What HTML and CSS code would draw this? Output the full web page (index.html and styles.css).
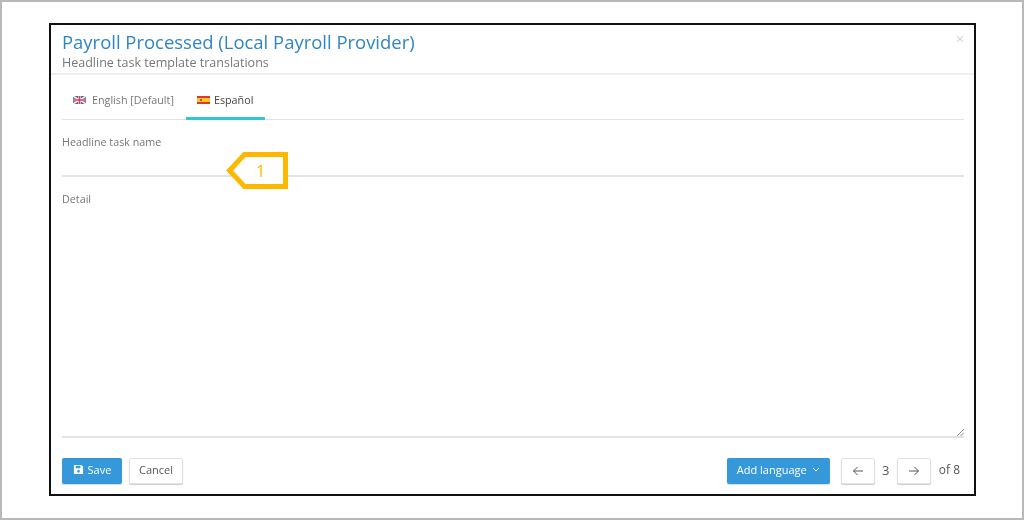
FILE: index.html
```html
<!DOCTYPE html>
<html lang="en">
<head>
<meta charset="utf-8">
<title>Payroll Processed</title>
<link rel="stylesheet" href="styles.css">
</head>
<body>
<div class="frame">
  <div class="modal">
    <header class="head">
      <div>
        <h1 class="title">Payroll Processed (Local Payroll Provider)</h1>
        <p class="subtitle">Headline task template translations</p>
      </div>
      <span class="close">×</span>
    </header>
    <div class="content">
      <nav class="tabs">
        <div class="tab">
          <svg class="flag" viewBox="0 0 13 8"><rect width="13" height="8" fill="#4a5a9c"/><path d="M0 0L13 8M13 0L0 8" stroke="#eee" stroke-width="1.6"/><path d="M6.5 0V8M0 4H13" stroke="#eee" stroke-width="2.6"/><path d="M6.5 0V8M0 4H13" stroke="#d8434f" stroke-width="1.4"/></svg>
          <span>English [Default]</span>
        </div>
        <div class="tab tab-active">
          <svg class="flag" viewBox="0 0 13 8"><rect width="13" height="8" fill="#e2342b"/><rect y="2" width="13" height="4" fill="#f7c623"/><rect x="3" y="3" width="2" height="2" fill="#c0562a"/></svg>
          <span>Español</span>
        </div>
      </nav>
      <div class="field field-name">
        <label class="label">Headline task name</label>
        <div class="line-input"></div>
        <div class="callout">
          <svg class="callout-shape" viewBox="0 0 62 37"><path d="M3.5 18.500L18.500 2.500H59.500V34.500H18.500Z" fill="#fff" stroke="#fdb900" stroke-width="5"/></svg>
          <span class="callout-num">1</span>
        </div>
      </div>
      <div class="field field-detail">
        <label class="label">Detail</label>
        <div class="line-area">
          <svg class="grip" viewBox="0 0 8 8"><path d="M1 8L8 1M4.500 8L8 4.500" stroke="#888" stroke-width="1"/></svg>
        </div>
      </div>
    </div>
    <footer class="foot">
      <div class="group">
        <button class="btn btn-primary btn-save">
          <svg class="save-icon" viewBox="0 0 12 12"><path fill-rule="evenodd" d="M1.500 1H9L11 3V10.500A.5.5 0 0 1 10.500 11H1.500A.5.5 0 0 1 1 10.500V1.500A.5.5 0 0 1 1.500 1ZM3 2V4.500H8V2ZM6 6.500A1.500 1.500 0 1 0 6 9.500A1.500 1.500 0 1 0 6 6.500Z" fill="#fff"/></svg>
          Save
        </button>
        <button class="btn btn-default btn-cancel">Cancel</button>
      </div>
      <div class="group group-right">
        <button class="btn btn-primary btn-add">
          Add language
          <svg class="chev" viewBox="0 0 8 5"><path d="M1 1L4 4L7 1" fill="none" stroke="#fff" stroke-width="1"/></svg>
        </button>
        <div class="pager">
          <button class="btn btn-default btn-arrow"><svg class="arrow" viewBox="0 0 12 10"><path d="M11 5H1.500M5.500 1L1.500 5L5.500 9" fill="none" stroke="#555" stroke-width="1"/></svg></button>
          <span class="page-num">3</span>
          <button class="btn btn-default btn-arrow"><svg class="arrow" viewBox="0 0 12 10"><path d="M1 5H10.500M6.500 1L10.500 5L6.500 9" fill="none" stroke="#555" stroke-width="1"/></svg></button>
          <span class="page-of">of 8</span>
        </div>
      </div>
    </footer>
  </div>
</div>
</body>
</html>
```
FILE: styles.css
```css
* { box-sizing: border-box; }
html, body { margin: 0; padding: 0; }
body {
  font-family: "Open Sans", "Liberation Sans", sans-serif;
  background: #fff;
  color: #555;
}
.frame {
  width: 1024px;
  height: 520px;
  border: 2px solid #b9b9b9;
  padding: 21px 46px 23px 47px;
  overflow: hidden;
}
.modal {
  height: 473px;
  border: 2px solid #111;
  background: #fff;
  display: flex;
  flex-direction: column;
}
.head, .content, .foot { filter: blur(0.35px); }
.head {
  height: 50px;
  padding: 5px 10px 0 11px;
  border-bottom: 2px solid #efefef;
  display: flex;
  justify-content: space-between;
  align-items: flex-start;
}
.title {
  margin: 0;
  font-size: 18.470px;
  line-height: 24px;
  font-weight: 400;
  color: #2f86c5;
}
.subtitle {
  margin: 1px 0 0;
  font-size: 12.500px;
  line-height: 16px;
  color: #777;
}
.close {
  font-size: 14px;
  line-height: 16px;
  margin-top: 1px;
  color: #d0d0d0;
}
.content {
  flex: 1;
  padding: 0 10px 0 11px;
  display: flex;
  flex-direction: column;
}
.tabs {
  height: 45px;
  display: flex;
  border-bottom: 1px solid #dfe3e8;
}
.tab {
  height: 45px;
  display: flex;
  align-items: center;
  gap: 6px;
  padding: 8px 12px 0 11px;
  font-size: 10.750px;
  color: #777;
  border-bottom: 3px solid transparent;
}
.tab-active {
  color: #444;
  gap: 4px;
  border-bottom-color: #2fc6d8;
  width: 79px;
  flex: none;
  padding-right: 0;
}
.flag { width: 13px; height: 8px; display: block; flex: none; }
.field { display: flex; flex-direction: column; }
.label {
  font-size: 10.750px;
  line-height: 14px;
  color: #777;
}
.field-name {
  position: relative;
  padding-top: 15px;
  height: 57px;
}
.line-input {
  flex: 1;
  border-bottom: 2px solid #e0e4ec;
}
.callout {
  position: absolute;
  left: 164px;
  top: 32px;
  width: 62px;
  height: 37px;
}
.callout-shape { width: 62px; height: 37px; display: block; }
.callout-num {
  position: absolute;
  left: 0;
  right: 0;
  top: 7px;
  padding-left: 7px;
  text-align: center;
  font-size: 17px;
  line-height: 24px;
  color: #fdb900;
}
.field-detail {
  flex: 1;
  padding-top: 15px;
}
.line-area {
  flex: 1;
  border-bottom: 2px solid #e0e4ec;
  position: relative;
}
.grip {
  position: absolute;
  right: 0;
  bottom: 0;
  width: 8px;
  height: 8px;
}
.foot {
  height: 56px;
  padding: 20px 14px 0 11px;
  display: flex;
  justify-content: space-between;
  align-items: flex-start;
}
.group { display: flex; gap: 7px; }
.group-right { gap: 11px; }
.btn {
  height: 26px;
  border-radius: 2px;
  font-family: inherit;
  font-size: 11px;
  padding: 0 0 3px;
  display: flex;
  align-items: center;
  justify-content: center;
}
.btn-primary {
  background: #3498db;
  border: 0;
  color: #fff;
  box-shadow: 0 1px 1px rgba(0, 0, 0, 0.15);
}
.btn-default {
  background: #fff;
  border: 1px solid #e2e2e2;
  color: #555;
  box-shadow: 0 1px 1px rgba(0, 0, 0, 0.2);
}
.btn-save { width: 60px; gap: 4px; }
.btn-cancel { width: 54px; }
.btn-add { width: 103px; gap: 5px; }
.save-icon { width: 11px; height: 11px; }
.chev { width: 8px; height: 5px; }
.pager { display: flex; align-items: center; }
.btn-arrow { width: 34px; padding: 0; }
.arrow { width: 12px; height: 10px; }
.page-num { width: 22px; text-align: center; font-size: 13px; line-height: 22px; margin-top: -3px; }
.page-of { margin-left: 8px; font-size: 12px; margin-top: -3px; }
```
